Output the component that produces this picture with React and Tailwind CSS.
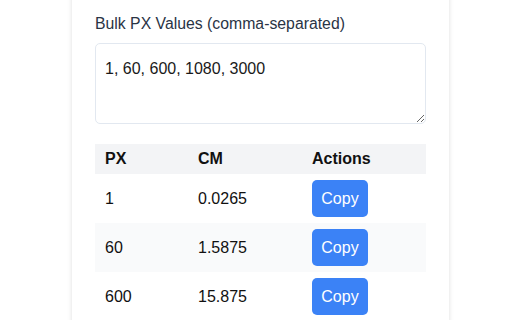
import React from "react";

const rows = [
  { px: "1", cm: "0.0265", bg: "bg-white" },
  { px: "60", cm: "1.5875", bg: "bg-[#f9fafb]" },
  { px: "600", cm: "15.875", bg: "bg-white" },
  { px: "1080", cm: "28.575", bg: "bg-[#f9fafb]" },
];

export default function App() {
  return (
    <div
      className="h-[320px] w-[512px] overflow-hidden bg-white"
      style={{ fontFamily: '"Liberation Sans", Arial, sans-serif' }}
    >
      <div className="pl-[72px]">
        <div className="-mt-5 w-[377px] rounded-lg bg-white px-[23px] pt-[32px] pb-6 shadow-[0_0_5px_rgba(0,0,0,0.13)]">
          <label className="block text-[15.8px] leading-6 text-[#2a3445]">
            Bulk PX Values (comma-separated)
          </label>
          <textarea
            className="mt-[7px] block h-[81px] w-full rounded-[5px] border border-[#e2e8f0] px-[9px] pt-[13px] text-[16px] leading-6 text-[#1a1a1a] outline-none"
            defaultValue="1, 60, 600, 1080, 3000"
          />
          <table className="mt-[20px] w-full table-fixed border-collapse text-[16px] text-[#111111]">
            <colgroup>
              <col className="w-[93px]" />
              <col className="w-[114px]" />
              <col />
            </colgroup>
            <thead>
              <tr className="bg-[#f3f4f6]">
                <th className="px-[10px] py-[3px] text-left font-bold leading-6">PX</th>
                <th className="px-[10px] py-[3px] text-left font-bold leading-6">CM</th>
                <th className="px-[10px] py-[3px] text-left font-bold leading-6">Actions</th>
              </tr>
            </thead>
            <tbody>
              {rows.map((r) => (
                <tr key={r.px} className={r.bg}>
                  <td className="px-[10px] py-[6px] leading-6">{r.px}</td>
                  <td className="px-[10px] py-[6px] leading-6">{r.cm}</td>
                  <td className="px-[10px] py-[6px]">
                    <button className="flex h-[37px] w-[56px] items-center justify-center rounded-[5px] bg-[#3b82f6] text-[16px] text-white">
                      Copy
                    </button>
                  </td>
                </tr>
              ))}
            </tbody>
          </table>
        </div>
      </div>
    </div>
  );
}
